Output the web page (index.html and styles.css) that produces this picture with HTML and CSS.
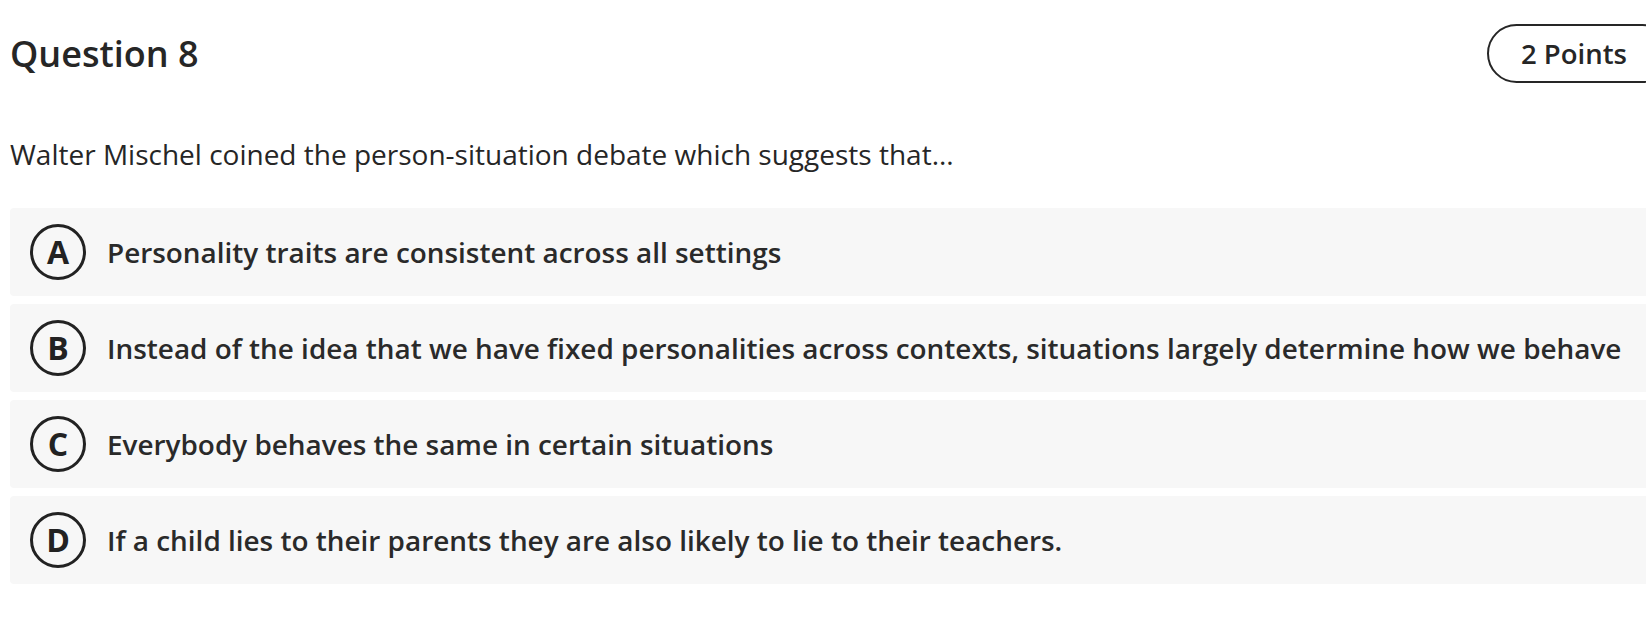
FILE: index.html
```html
<!DOCTYPE html>
<html lang="en">
<head>
<meta charset="utf-8">
<title>Question 8</title>
<link rel="stylesheet" href="styles.css">
</head>
<body>
<div class="page">
  <div class="header">
    <h1 class="title">Question 8</h1>
    <div class="points">2 Points</div>
  </div>
  <p class="prompt">Walter Mischel coined the person-situation debate which suggests that...</p>
  <div class="options">
    <div class="option"><span class="letter">A</span><span class="text">Personality traits are consistent across all settings</span></div>
    <div class="option"><span class="letter">B</span><span class="text">Instead of the idea that we have fixed personalities across contexts, situations largely determine how we behave</span></div>
    <div class="option"><span class="letter">C</span><span class="text">Everybody behaves the same in certain situations</span></div>
    <div class="option"><span class="letter">D</span><span class="text">If a child lies to their parents they are also likely to lie to their teachers.</span></div>
  </div>
</div>
</body>
</html>
```
FILE: styles.css
```css
html, body {
  margin: 0;
  padding: 0;
  background: #ffffff;
  overflow: hidden;
}
body {
  font-family: "Open Sans", "Liberation Sans", sans-serif;
  color: #262626;
}
.page {
  width: 1662px;
  padding-left: 10px;
}
.header {
  display: flex;
  justify-content: space-between;
  align-items: center;
  padding-top: 24px;
}
.title {
  margin: 0;
  font-size: 36px;
  font-weight: 600;
  line-height: 59px;
}
.points {
  box-sizing: border-box;
  height: 59px;
  width: 185px;
  border: 2px solid #262626;
  border-radius: 30px;
  padding-left: 32px;
  font-size: 27.5px;
  font-weight: 600;
  line-height: 55px;
}
.prompt {
  margin: 52px 0 35px;
  font-size: 28px;
  line-height: 38px;
  font-weight: 400;
}
.options {
  display: flex;
  flex-direction: column;
  gap: 8px;
}
.option {
  box-sizing: border-box;
  display: flex;
  align-items: center;
  height: 88px;
  background: #f7f7f7;
  border-radius: 4px;
  padding-left: 20px;
  padding-bottom: 1px;
  gap: 21px;
}
.letter {
  box-sizing: border-box;
  width: 56px;
  height: 56px;
  flex: none;
  border: 3px solid #222222;
  border-radius: 50%;
  display: flex;
  align-items: center;
  justify-content: center;
  font-size: 32px;
  font-weight: 700;
  color: #222222;
}
.text {
  font-size: 27.9px;
  font-weight: 600;
  color: #2a2a2a;
  white-space: nowrap;
}
```
